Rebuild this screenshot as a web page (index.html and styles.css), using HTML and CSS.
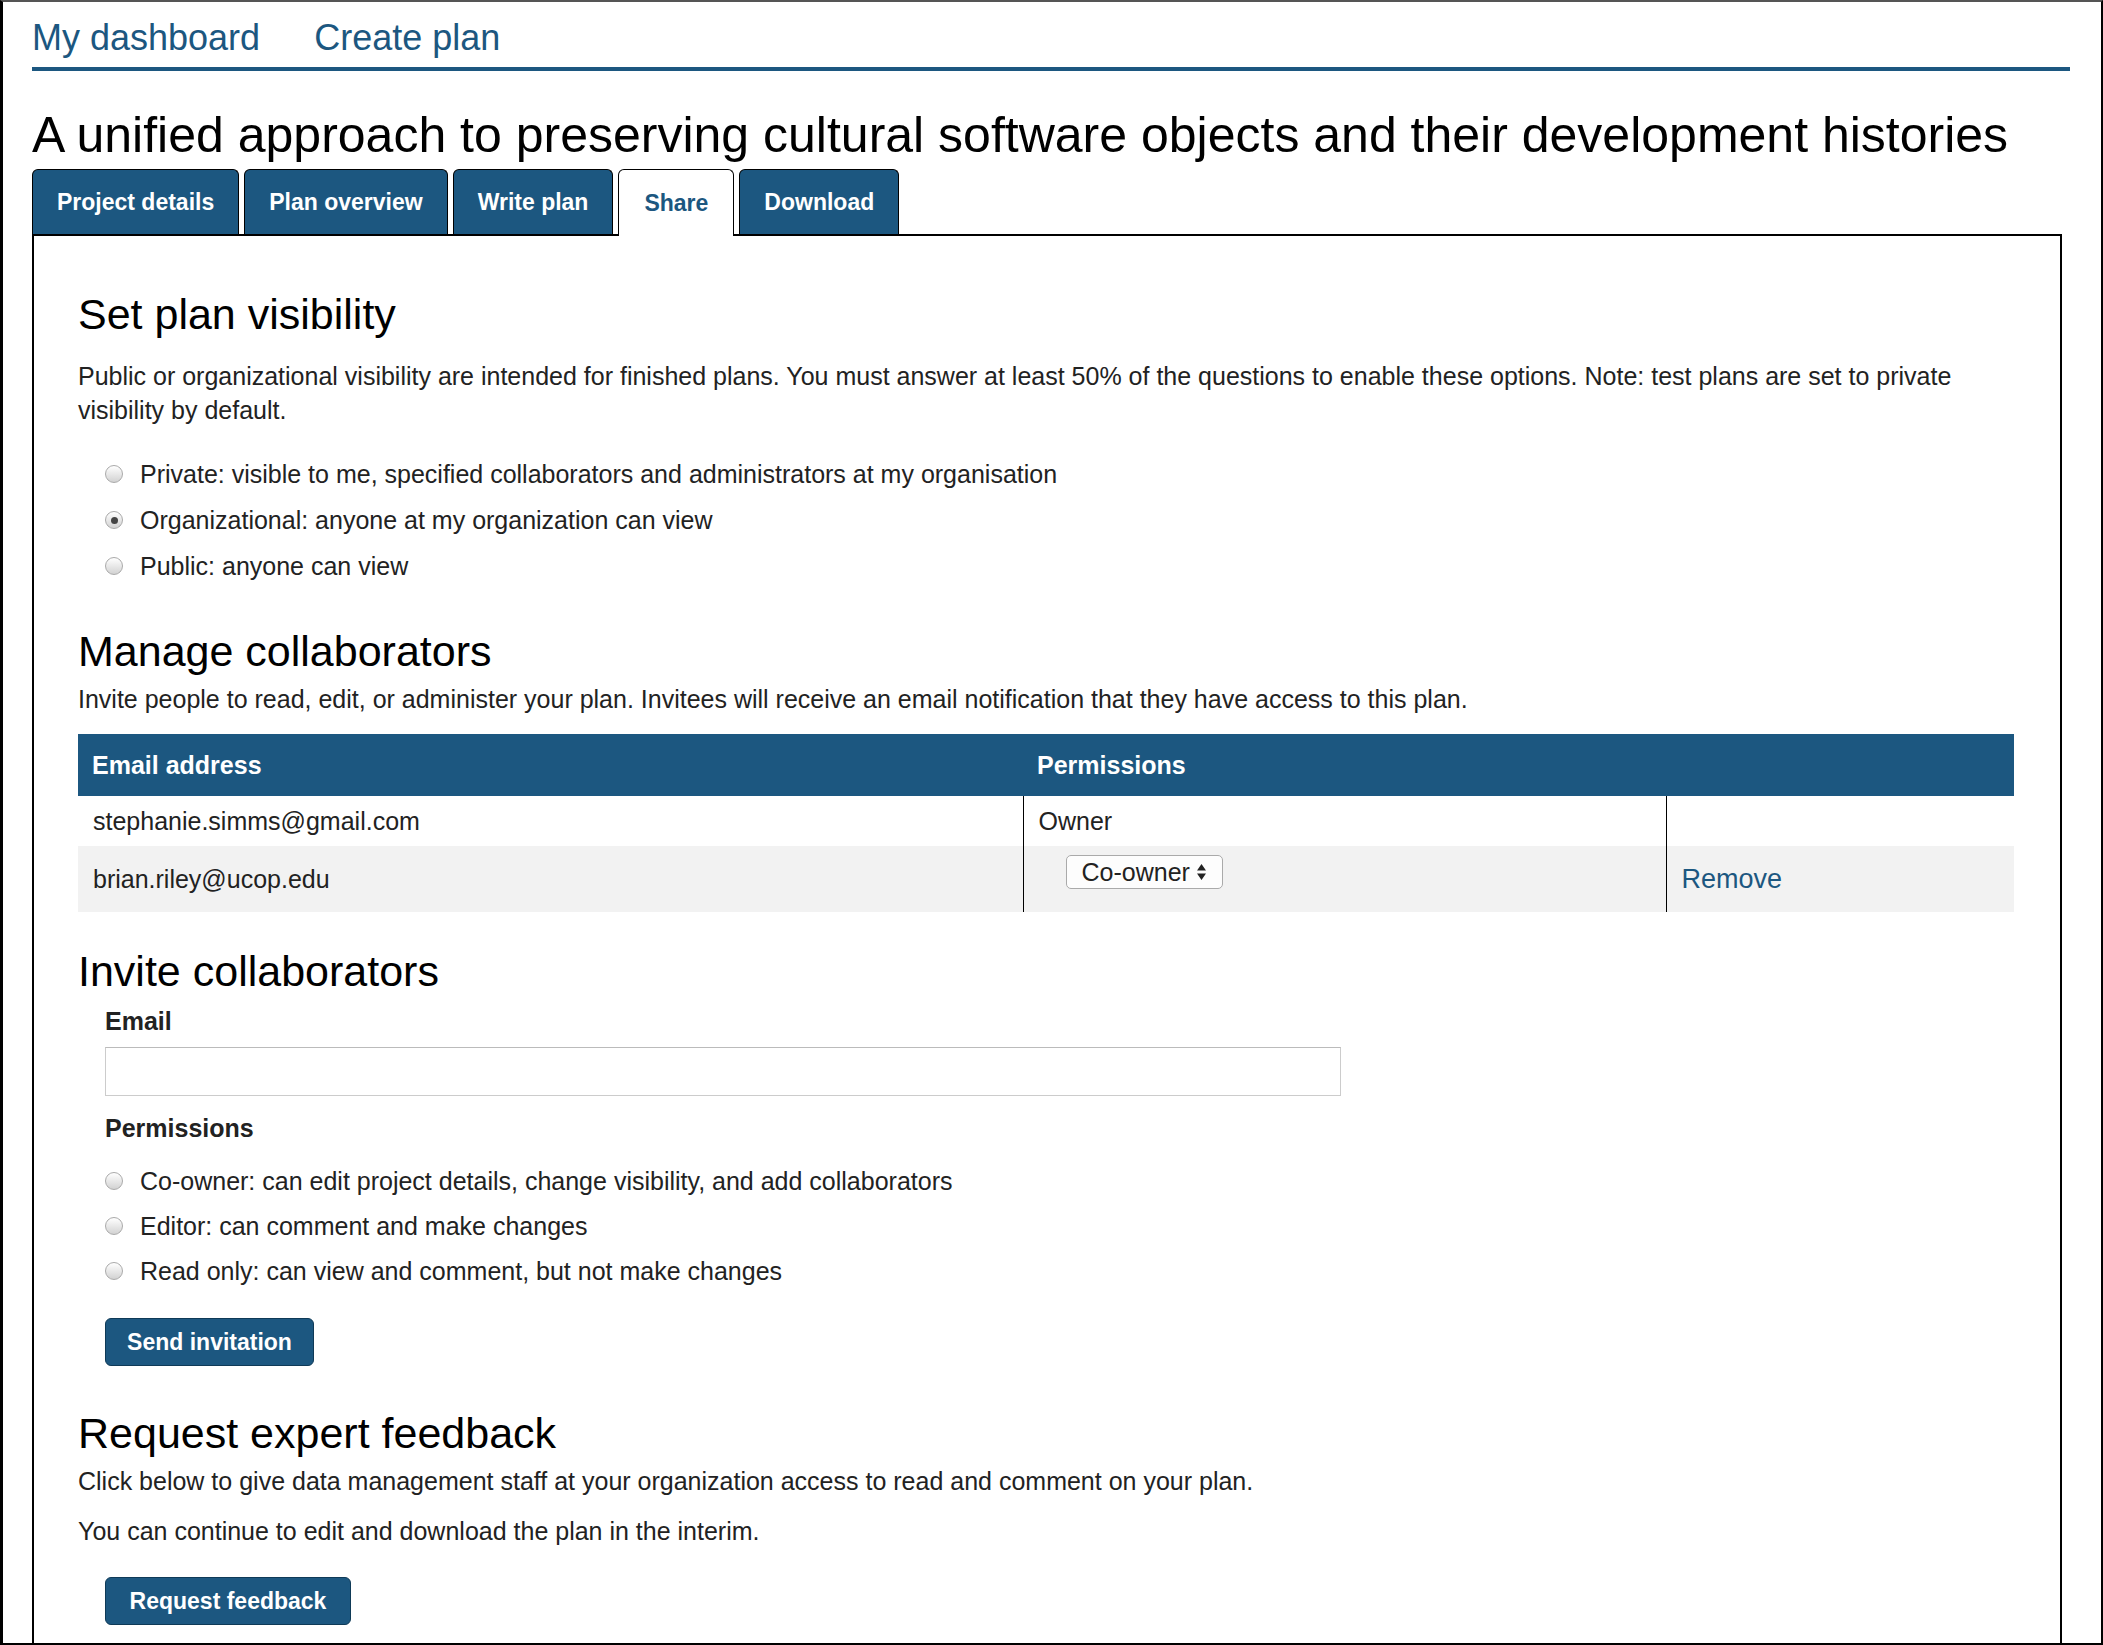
FILE: index.html
```html
<!DOCTYPE html>
<html lang="en">
<head>
<meta charset="utf-8">
<title>Share plan</title>
<link rel="stylesheet" href="styles.css">
</head>
<body>
<div class="frame">
  <nav class="topnav">
    <a href="#">My dashboard</a>
    <a href="#">Create plan</a>
  </nav>
  <h1 class="title">A unified approach to preserving cultural software objects and their development histories</h1>
  <ul class="tabs">
    <li class="tab">Project details</li>
    <li class="tab">Plan overview</li>
    <li class="tab">Write plan</li>
    <li class="tab active">Share</li>
    <li class="tab">Download</li>
  </ul>
  <div class="panel">
    <h2 class="h2 first">Set plan visibility</h2>
    <p class="para">Public or organizational visibility are intended for finished plans. You must answer at least 50% of the questions to enable these options. Note: test plans are set to private visibility by default.</p>
    <div class="radios vis">
      <label class="radio"><span class="dot"></span>Private: visible to me, specified collaborators and administrators at my organisation</label>
      <label class="radio"><span class="dot on"></span>Organizational: anyone at my organization can view</label>
      <label class="radio"><span class="dot"></span>Public: anyone can view</label>
    </div>

    <h2 class="h2 manage">Manage collaborators</h2>
    <p class="lead">Invite people to read, edit, or administer your plan. Invitees will receive an email notification that they have access to this plan.</p>
    <table class="collab">
      <colgroup>
        <col class="w1">
        <col class="w2">
        <col>
      </colgroup>
      <thead>
        <tr><th>Email address</th><th>Permissions</th><th></th></tr>
      </thead>
      <tbody>
        <tr class="r1"><td class="c1">stephanie.simms@gmail.com</td><td class="c2">Owner</td><td class="c3"></td></tr>
        <tr class="r2"><td class="c1">brian.riley@ucop.edu</td><td class="c2"><span class="select">Co-owner<svg class="arrows" width="11" height="20" viewBox="0 0 11 20"><path d="M5.5 2 L10 8.5 H1 Z M5.5 18 L10 11.5 H1 Z" fill="#222"/></svg></span></td><td class="c3"><a href="#" class="remove">Remove</a></td></tr>
      </tbody>
    </table>

    <h2 class="h2 invite">Invite collaborators</h2>
    <div class="form">
      <div class="label">Email</div>
      <div class="input"></div>
      <div class="label perm">Permissions</div>
      <div class="radios permradios">
        <label class="radio"><span class="dot"></span>Co-owner: can edit project details, change visibility, and add collaborators</label>
        <label class="radio"><span class="dot"></span>Editor: can comment and make changes</label>
        <label class="radio"><span class="dot"></span>Read only: can view and comment, but not make changes</label>
      </div>
      <button class="btn send">Send invitation</button>
    </div>

    <h2 class="h2 request">Request expert feedback</h2>
    <p class="lead">Click below to give data management staff at your organization access to read and comment on your plan.</p>
    <p class="lead second">You can continue to edit and download the plan in the interim.</p>
    <div class="form">
      <button class="btn feedback">Request feedback</button>
    </div>
  </div>
</div>
</body>
</html>
```

FILE: styles.css
```css
html, body {
  margin: 0;
  padding: 0;
  background: #fff;
}
body {
  font-family: "Liberation Sans", Arial, Helvetica, sans-serif;
  color: #222;
}
.frame {
  box-sizing: border-box;
  width: 2103px;
  height: 1645px;
  overflow: hidden;
  border: 2px solid #000;
  border-left-width: 3px;
  border-top-color: #555;
  padding: 15px 31px 0 29px;
}
.topnav {
  display: flex;
  gap: 54px;
  font-size: 36px;
  line-height: 42px;
  padding: 0 0 8px 0;
  border-bottom: 4px solid #1c5780;
}
.topnav a {
  color: #1c5780;
  text-decoration: none;
}
.title {
  font-size: 50px;
  font-weight: normal;
  line-height: 60px;
  margin: 34px 0 0 0;
  color: #000;
}
.tabs {
  list-style: none;
  display: flex;
  gap: 5px;
  margin: 4px 0 0 0;
  padding: 0;
  position: relative;
  z-index: 1;
}
.tab {
  box-sizing: border-box;
  height: 65px;
  padding: 0 24px;
  display: flex;
  align-items: center;
  background: #1c5780;
  color: #fff;
  font-size: 23px;
  font-weight: bold;
  border: 1px solid #000;
  border-bottom: none;
  border-radius: 6px 6px 0 0;
}
.tab.active {
  background: #fff;
  color: #1c5780;
  height: 67px;
  margin-bottom: -2px;
  padding: 0 25px;
}
.panel {
  border: 2px solid #000;
  border-bottom: none;
  margin-right: 8px;
  padding: 53px 46px 0 44px;
  min-height: 1500px;
}
.h2 {
  font-size: 43px;
  font-weight: normal;
  line-height: 50px;
  margin: 0;
  color: #000;
}
.para, .lead {
  font-size: 25px;
  line-height: 34px;
  margin: 0;
}
.para {
  margin-top: 20px;
}
.radios {
  display: flex;
  flex-direction: column;
  gap: 12px;
  padding-left: 27px;
}
.radios.vis {
  margin-top: 30px;
}
.radio {
  display: flex;
  align-items: center;
  font-size: 25px;
  line-height: 34px;
}
.dot {
  box-sizing: border-box;
  width: 18px;
  height: 18px;
  border-radius: 50%;
  border: 1px solid #aaa;
  background: linear-gradient(#ffffff, #d2d2d2);
  margin-right: 17px;
  flex: none;
  position: relative;
}
.dot.on::after {
  content: "";
  position: absolute;
  left: 4.5px;
  top: 4.5px;
  width: 7px;
  height: 7px;
  border-radius: 50%;
  background: #444;
}
.manage {
  margin-top: 43px;
}
.manage + .lead {
  margin-top: 6px;
}
.collab {
  width: 100%;
  table-layout: fixed;
  border-collapse: collapse;
  margin-top: 18px;
  font-size: 25px;
}
.collab .w1 { width: 945px; }
.collab .w2 { width: 643px; }
.collab th {
  background: #1c5780;
  color: #fff;
  font-size: 25px;
  text-align: left;
  height: 62px;
  padding: 0 14px;
  font-weight: bold;
}
.collab td {
  padding: 0 15px;
  text-align: left;
}
.collab tbody .c2, .collab tbody .c3 {
  border-left: 1px solid #000;
}
.collab .r1 td { height: 50px; }
.collab .r2 td { height: 66px; background: #f2f2f2; }
.collab .r2 .c2 {
  vertical-align: top;
  padding-top: 9px;
  padding-left: 42px;
  height: 57px;
}
.select {
  box-sizing: border-box;
  display: inline-flex;
  align-items: center;
  height: 34px;
  width: 157px;
  padding: 0 0 0 15px;
  border: 1px solid #aaa;
  border-radius: 5px;
  background: #fdfdfd;
  font-size: 25px;
  gap: 6px;
}
.arrows { flex: none; }
.remove {
  color: #1c5780;
  text-decoration: none;
  font-size: 27px;
}
.invite {
  margin-top: 34px;
}
.form {
  padding-left: 27px;
}
.label {
  font-size: 25px;
  font-weight: bold;
  line-height: 34px;
  margin-top: 8px;
}
.input {
  box-sizing: border-box;
  width: 1236px;
  height: 49px;
  margin-top: 9px;
  border: 1px solid #ccc;
  border-top-color: #bbb;
  background: #fff;
}
.label.perm {
  margin-top: 15px;
}
.permradios {
  margin-top: 19px;
  gap: 11px;
  padding-left: 0;
}
.btn {
  font-family: inherit;
  font-size: 23px;
  font-weight: bold;
  color: #fff;
  background: #1c5780;
  border: 1px solid #0f3a57;
  border-radius: 6px;
  height: 48px;
  padding: 0 16px;
  cursor: pointer;
  display: block;
}
.btn.send {
  margin-top: 30px;
  width: 209px;
}
.btn.feedback {
  margin-top: 29px;
  width: 246px;
}
.request {
  margin-top: 42px;
}
.request + .lead {
  margin-top: 6px;
}
.lead.second {
  margin-top: 16px;
}
```
